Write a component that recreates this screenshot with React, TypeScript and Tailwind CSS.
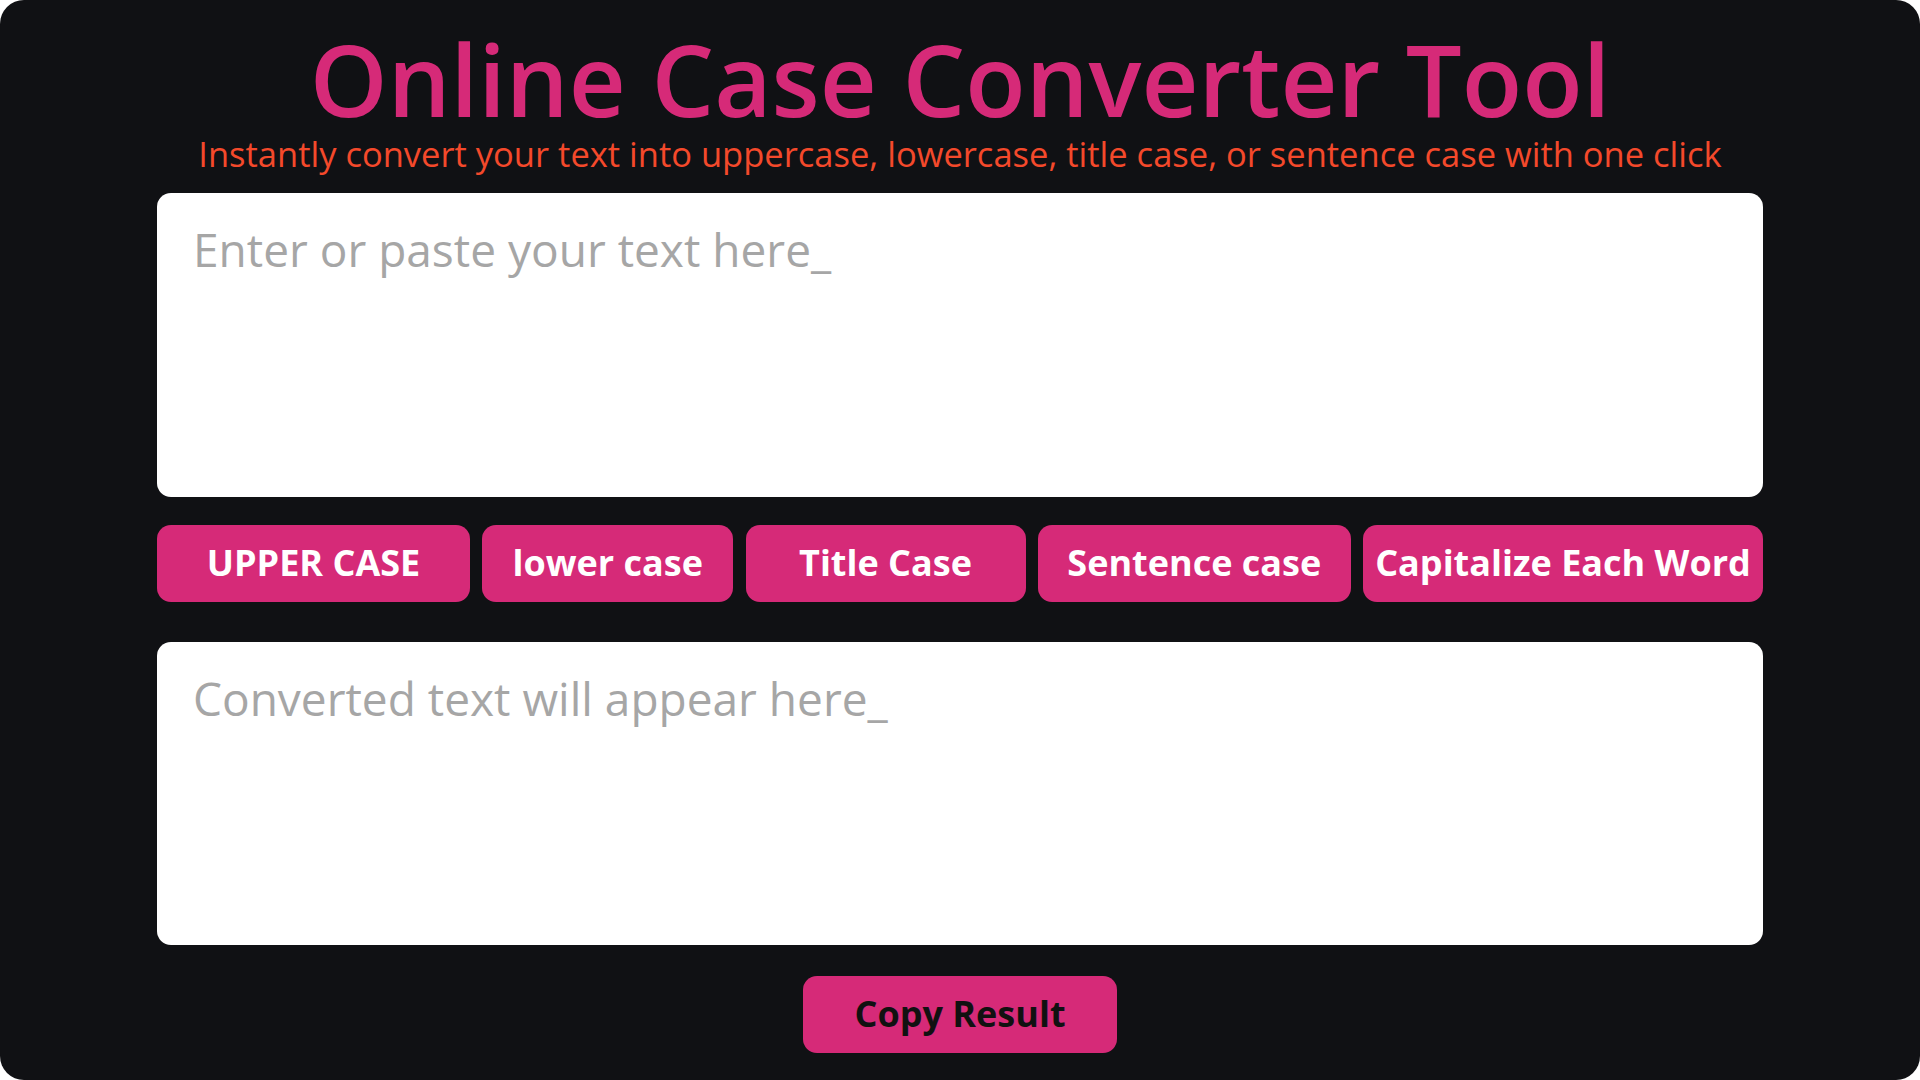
import React from "react";

export default function App() {
  const buttons = [
    { label: "UPPER CASE", w: "w-[313px]" },
    { label: "lower case", w: "w-[251px]" },
    { label: "Title Case", w: "w-[280px]" },
    { label: "Sentence case", w: "w-[313px]" },
    { label: "Capitalize Each Word", w: "w-[400px]" },
  ];
  return (
    <div className="w-full min-h-screen bg-white font-['Open_Sans',_'Noto_Sans',_sans-serif]">
      <div className="w-full h-[1080px] rounded-[24px] bg-[#101114] flex flex-col items-center">
        <h1 className="mt-[29px] text-[99px] leading-none font-semibold text-[#d62a78]">
          Online Case Converter Tool
        </h1>
        <p className="mt-[9px] text-[34.5px] leading-none text-[#f4492b]">
          Instantly convert your text into uppercase, lowercase, title case, or sentence case with one click
        </p>
        <textarea
          className="mt-[21px] w-[1606px] h-[304px] bg-white rounded-[14px] resize-none outline-none px-[36px] pt-[27px] text-[46px] leading-[1.3] text-[#333] placeholder:text-[#a6a6a6]"
          placeholder="Enter or paste your text here_"
        />
        <div className="mt-[28px] w-[1606px] flex justify-between">
          {buttons.map((b) => (
            <button
              key={b.label}
              className={`${b.w} h-[77px] rounded-[14px] bg-[#d62a78] text-white text-[36px] font-bold leading-none`}
            >
              {b.label}
            </button>
          ))}
        </div>
        <textarea
          className="mt-[40px] w-[1606px] h-[303px] bg-white rounded-[14px] resize-none outline-none px-[36px] pt-[27px] text-[46px] leading-[1.3] text-[#333] placeholder:text-[#a6a6a6]"
          placeholder="Converted text will appear here_"
          readOnly
        />
        <button className="mt-[31px] w-[314px] h-[77px] rounded-[14px] bg-[#d62a78] text-[#111] text-[36px] font-bold leading-none">
          Copy Result
        </button>
      </div>
    </div>
  );
}
